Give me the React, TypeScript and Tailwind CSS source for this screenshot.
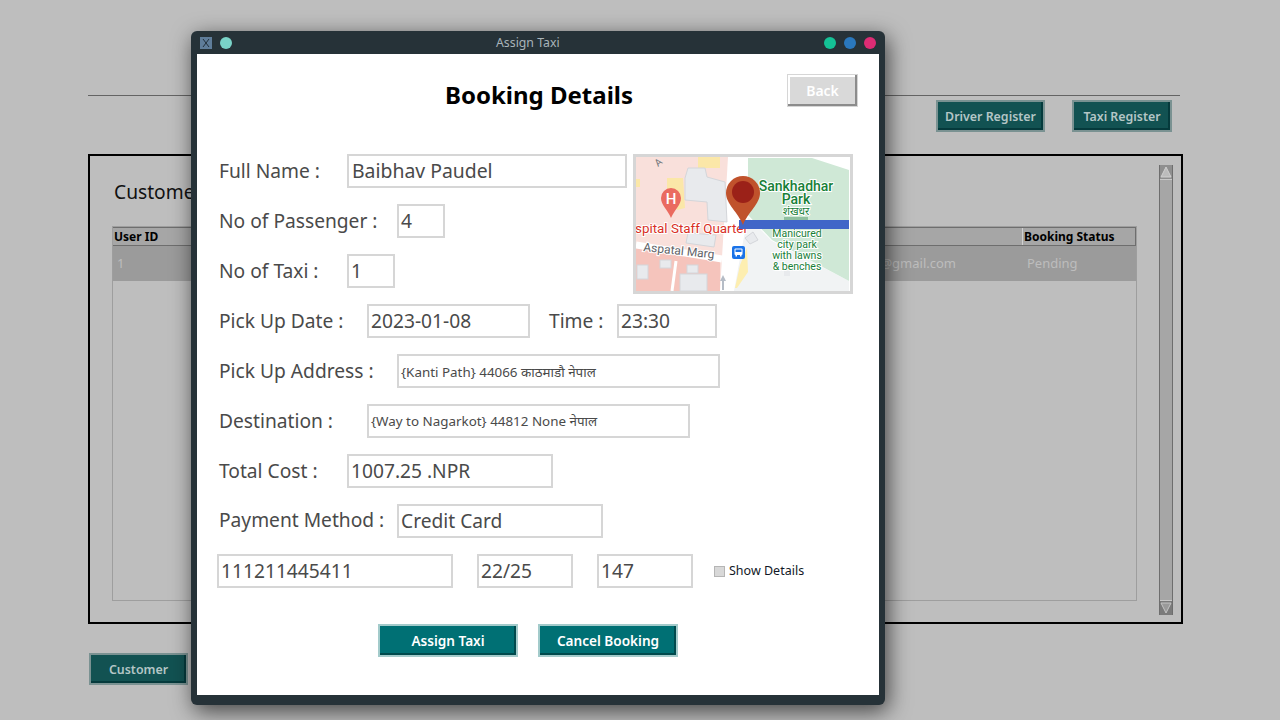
const font = { fontFamily: '"Noto Sans", "Noto Sans Devanagari", sans-serif' };

function Field({ value, width, small }: { value: string; width: string; small?: boolean }) {
  return (
    <div className={`${width} h-[34px] border-2 border-[#d6d6d6] bg-white flex items-center pl-[2px] text-[#4a4a4a] whitespace-nowrap overflow-hidden ${small ? "text-[13.4px] pt-[2px]" : "text-[19.2px]"}`}>
      {value}
    </div>
  );
}

function Label({ text, width }: { text: string; width: string }) {
  return <div className={`${width} shrink-0 text-[19.2px] text-[#4a4a4a] whitespace-nowrap`}>{text}</div>;
}

function TealButton({ text }: { text: string }) {
  return (
    <button className="w-[140px] h-[33px] pt-[2px] bg-[#007074] border-2 border-[#a3cbcb] shadow-[inset_-2px_-2px_0_#004a4d] text-white text-[13.6px] font-semibold">
      {text}
    </button>
  );
}

function DimButton({ text, width }: { text: string; width: string }) {
  return (
    <button className={`${width} h-[32px] pt-[2px] bg-[#125252] border-2 border-[#7a9292] shadow-[inset_-2px_-2px_0_#053a3c] text-[#b4c6c6] text-[12.4px] font-semibold`}>
      {text}
    </button>
  );
}

function MapPreview() {
  const halo = { stroke: "white", strokeWidth: 2, paintOrder: "stroke" as const, fontFamily: "Roboto, sans-serif" };
  return (
    <div className="w-[220px] h-[140px] ml-[6px] mt-2 border-[3px] border-[#d6d6d6] bg-white shrink-0">
      <svg viewBox="0 0 214 134" width="214" height="134">
        <rect width="214" height="134" fill="#ffffff" />
        <polygon points="0,0 92,0 84,134 0,134" fill="#f9e0db" />
        <polygon points="0,90 84,104 84,134 0,134" fill="#f5c4bc" />
        <polygon points="112,60 136,84 213,124 213,134 98,134 106,90" fill="#f1f3f4" />
        <polygon points="112,1 176,1 213,13 213,124 136,83 112,58" fill="#cfe8d6" />
        <polygon points="31,21 47,21 49,51 41,53 31,40" fill="#fbe7a8" />
        <polygon points="62,0 84,0 84,11 62,11" fill="#fbe7a8" />
        <polygon points="0,22 4,22 4,30 0,30" fill="#fbe7a8" />
        <polygon points="49,21 52,11 69,11 71,20 89,25 91,65 72,63 71,45 49,43" fill="#e8eaed" stroke="#d4d6da" />
        <polygon points="52,76 80,78 78,90 50,86" fill="#e8eaed" stroke="#d4d6da" />
        <rect x="24" y="103" width="11" height="8" fill="#e8eaed" stroke="#d4d6da" />
        <rect x="51" y="108" width="11" height="8" fill="#e8eaed" stroke="#d4d6da" />
        <rect x="44" y="117" width="27" height="17" fill="#e8eaed" stroke="#d4d6da" />
        <rect x="1" y="108" width="11" height="14" fill="#e8eaed" stroke="#d4d6da" />
        <line x1="0" y1="88" x2="86" y2="102" stroke="#ffffff" strokeWidth="7" />
        <line x1="40" y1="104" x2="36" y2="134" stroke="#ffffff" strokeWidth="3" />
        <polygon points="99,131 104,108 111,91 112,115 101,131" fill="#fdeeb0" />
        <polygon points="109,81 117,75 122,83 114,87" fill="#e8eaed" stroke="#d4d6da" />
        <rect x="148" y="114" width="6" height="5" fill="#e8eaed" />
        <text x="22" y="10" fontSize="10" fill="#70757a" transform="rotate(-40 22 10)" fontFamily="Roboto, sans-serif">A</text>
        <path d="M35 61 C31 52 25 48 25 41 A10 10 0 0 1 45 41 C45 48 39 52 35 61 Z" fill="#ea6b60" />
        <text x="35" y="47" fontSize="15" fontWeight="500" fill="white" textAnchor="middle" fontFamily="Roboto, sans-serif">H</text>
        <text x="-1" y="76" fontSize="13.4" fill="#d93025" style={halo}>spital Staff Quarter</text>
        <text x="7" y="94" fontSize="12" fill="#5f6368" transform="rotate(6 7 94)" style={halo}>Aspatal Marg</text>
        <rect x="96" y="89" width="13" height="13" rx="2" fill="#1a73e8" />
        <rect x="98.5" y="91.5" width="8" height="6.5" rx="1" fill="white" />
        <rect x="99.5" y="92.5" width="6" height="2.5" fill="#1a73e8" />
        <rect x="99.5" y="98" width="1.5" height="1.5" fill="white" />
        <rect x="104" y="98" width="1.5" height="1.5" fill="white" />
        <polygon points="84,124 87,118 90,124 88,124 88,133 86,133 86,124" fill="#b5bcc6" />
        <rect x="148" y="60" width="24" height="3" fill="#8fbf9f" />
        <g fill="#188038" textAnchor="middle" style={halo}>
          <text x="160" y="34" fontSize="14" fontWeight="500">Sankhadhar</text>
          <text x="160" y="47" fontSize="14" fontWeight="500">Park</text>
          <text x="160" y="58" fontSize="10.5" fontFamily="'Noto Sans', sans-serif">शंखधर</text>
          <text x="161" y="80" fontSize="10.5">Manicured</text>
          <text x="161" y="91" fontSize="10.5">city park</text>
          <text x="161" y="102" fontSize="10.5">with lawns</text>
          <text x="161" y="113" fontSize="10.5">&amp; benches</text>
        </g>
        <rect x="103" y="63" width="110" height="9" fill="#4066c8" />
        <path d="M107 68 C102 55 90 47 90 36 A17 17 0 0 1 124 36 C124 47 112 55 107 68 Z" fill="#c0522c" />
        <circle cx="107" cy="35" r="11" fill="#9b2118" />
      </svg>
    </div>
  );
}

function BookingWindow() {
  return (
    <div className="absolute left-[191px] top-[31px] w-[694px] h-[674px] bg-[#263238] rounded-[6px] shadow-[3px_6px_22px_rgba(0,0,0,0.65)] flex flex-col">
      <div className="h-[23px] shrink-0 flex items-center pl-[9px] pr-[9px]">
        <svg width="12" height="12" viewBox="0 0 12 12" className="shrink-0">
          <rect width="12" height="12" fill="#5f7d9a" />
          <path d="M3 2 L9 10 M9 2 L3 10" stroke="#22303c" strokeWidth="1" />
        </svg>
        <span className="w-3 h-3 rounded-full bg-[#7ad3c8] ml-[8px] shrink-0" />
        <div className="w-[264px] shrink-0" />
        <span className="text-[12.3px] pt-[2px] text-[#a9b4ba] whitespace-nowrap">Assign Taxi</span>
        <div className="flex-1" />
        <span className="w-3 h-3 rounded-full bg-[#14c296]" />
        <span className="w-3 h-3 rounded-full bg-[#2a78bd] ml-[8px]" />
        <span className="w-3 h-3 rounded-full bg-[#dd2c74] ml-[8px]" />
      </div>
      <div className="mx-[6px] h-[641px] bg-white text-[#4a4a4a]">
        <div className="h-[92px] grid grid-cols-[1fr_auto_1fr] pt-[20px]">
          <div />
          <div className="text-[24px] leading-[41px] pl-[2px] font-bold text-black whitespace-nowrap">Booking Details</div>
          <div className="justify-self-end pr-[21px]">
            <button className="w-[71px] h-[33px] bg-[#d9d9d9] border border-[#d6d6d6] shadow-[inset_-2px_-2px_0_#8c8c8c,inset_2px_2px_0_#ffffff] text-white text-[14px] font-semibold">Back</button>
          </div>
        </div>
        <div className="flex h-[150px] pl-[22px]">
          <div className="w-[408px] shrink-0">
            <div className="flex items-center h-[50px]">
              <Label text="Full Name :" width="w-[128px]" />
              <div className="w-[280px] h-[34px] border-2 border-[#d6d6d6] flex items-center pl-[3px] text-[19.4px] text-[#4a4a4a] whitespace-nowrap">Baibhav Paudel</div>
            </div>
            <div className="flex items-center h-[50px]">
              <Label text="No of Passenger :" width="w-[178px]" />
              <Field value="4" width="w-[48px]" />
            </div>
            <div className="flex items-center h-[50px]">
              <Label text="No of Taxi :" width="w-[128px]" />
              <Field value="1" width="w-[48px]" />
            </div>
          </div>
          <MapPreview />
        </div>
        <div className="flex items-center h-[50px] pl-[22px]">
          <Label text="Pick Up Date :" width="w-[148px]" />
          <Field value="2023-01-08" width="w-[163px]" />
          <Label text="Time :" width="w-[68px] ml-[19px]" />
          <Field value="23:30" width="w-[100px]" />
        </div>
        <div className="flex items-center h-[50px] pl-[22px]">
          <Label text="Pick Up Address :" width="w-[178px]" />
          <Field value="{Kanti Path} 44066 काठमाडौ नेपाल" width="w-[323px]" small />
        </div>
        <div className="flex items-center h-[50px] pl-[22px]">
          <Label text="Destination :" width="w-[148px]" />
          <Field value="{Way to Nagarkot} 44812 None नेपाल" width="w-[323px] pt-0!" small />
        </div>
        <div className="flex items-center h-[50px] pl-[22px]">
          <Label text="Total Cost :" width="w-[128px]" />
          <Field value="1007.25 .NPR" width="w-[206px]" />
        </div>
        <div className="flex items-center h-[50px] pl-[22px]">
          <Label text="Payment Method :" width="w-[178px] -mt-0.5" />
          <Field value="Credit Card" width="w-[206px]" />
        </div>
        <div className="flex items-center h-[50px] pl-[20px]">
          <Field value="111211445411" width="w-[236px]" />
          <div className="w-6" />
          <Field value="22/25" width="w-[96px]" />
          <div className="w-6" />
          <Field value="147" width="w-[96px]" />
          <div className="w-[11px] h-[11px] ml-[21px] bg-[#d8d8d8] border border-[#b5b5b5]" />
          <span className="ml-1 text-[12.5px] text-[#111827] whitespace-nowrap">Show Details</span>
        </div>
        <div className="flex gap-5 pl-[181px] mt-[28px]">
          <TealButton text="Assign Taxi" />
          <TealButton text="Cancel Booking" />
        </div>
      </div>
    </div>
  );
}

function Scrollbar() {
  return (
    <div className="w-[14px] h-[450px] ml-[22px] mt-[9px] flex flex-col bg-[#a6a6a6] border-x border-[#6e6e6e] shrink-0">
      <div className="h-[15px] bg-[#8f8f8f] flex items-center justify-center border-b border-[#c8c8c8]">
        <svg width="12" height="12" viewBox="0 0 12 12"><polygon points="6,1 11,11 1,11" fill="#bcbcbc" stroke="#d0d0d0" /></svg>
      </div>
      <div className="flex-1" />
      <div className="h-[15px] bg-[#7b7b7b] flex items-center justify-center border-t border-[#c8c8c8]">
        <svg width="12" height="12" viewBox="0 0 12 12"><polygon points="1,1 11,1 6,11" fill="#9a9a9a" stroke="#c4c4c4" /></svg>
      </div>
    </div>
  );
}

export default function App() {
  return (
    <div className="relative w-[1280px] h-[720px] overflow-hidden bg-[#bebebe]" style={font}>
      <div className="pt-[95px] pl-[88px]">
        <div className="w-[1092px] h-px bg-[#646464]" />
        <div className="flex justify-end gap-[27px] w-[1084px] mt-1">
          <DimButton text="Driver Register" width="w-[109px]" />
          <DimButton text="Taxi Register" width="w-[100px]" />
        </div>
        <div className="w-[1095px] h-[470px] mt-[22px] border-2 border-black flex">
          <div className="w-[1047px] pl-[22px] shrink-0">
            <div className="h-[70px] pt-[22px] pl-[2px] text-[19.2px] text-[#111] whitespace-nowrap">Customer Details</div>
            <div className="w-[1025px] h-[375px] border border-[#9e9e9e]">
              <div className="h-[19px] bg-[#a6a6a6] border-y border-[#6e6e6e] flex text-[12px] font-bold text-black leading-[17px]">
                <div className="flex-1 pl-[1px]">User ID</div>
                <div className="w-[114px] pl-[1px] border-x border-[#d0d0d0] border-r-[#6e6e6e]">Booking Status</div>
              </div>
              <div className="h-[35px] bg-[#9b9b9b] flex items-center text-[13px] text-[#bdbdbd]">
                <div className="w-[60px] pl-1">1</div>
                <div className="w-[783px] text-right">baibhav@gmail.com</div>
                <div className="pl-[71px]">Pending</div>
              </div>
            </div>
          </div>
          <Scrollbar />
        </div>
        <div className="mt-[29px] ml-px">
          <DimButton text="Customer" width="w-[99px]" />
        </div>
      </div>
      <BookingWindow />
    </div>
  );
}
